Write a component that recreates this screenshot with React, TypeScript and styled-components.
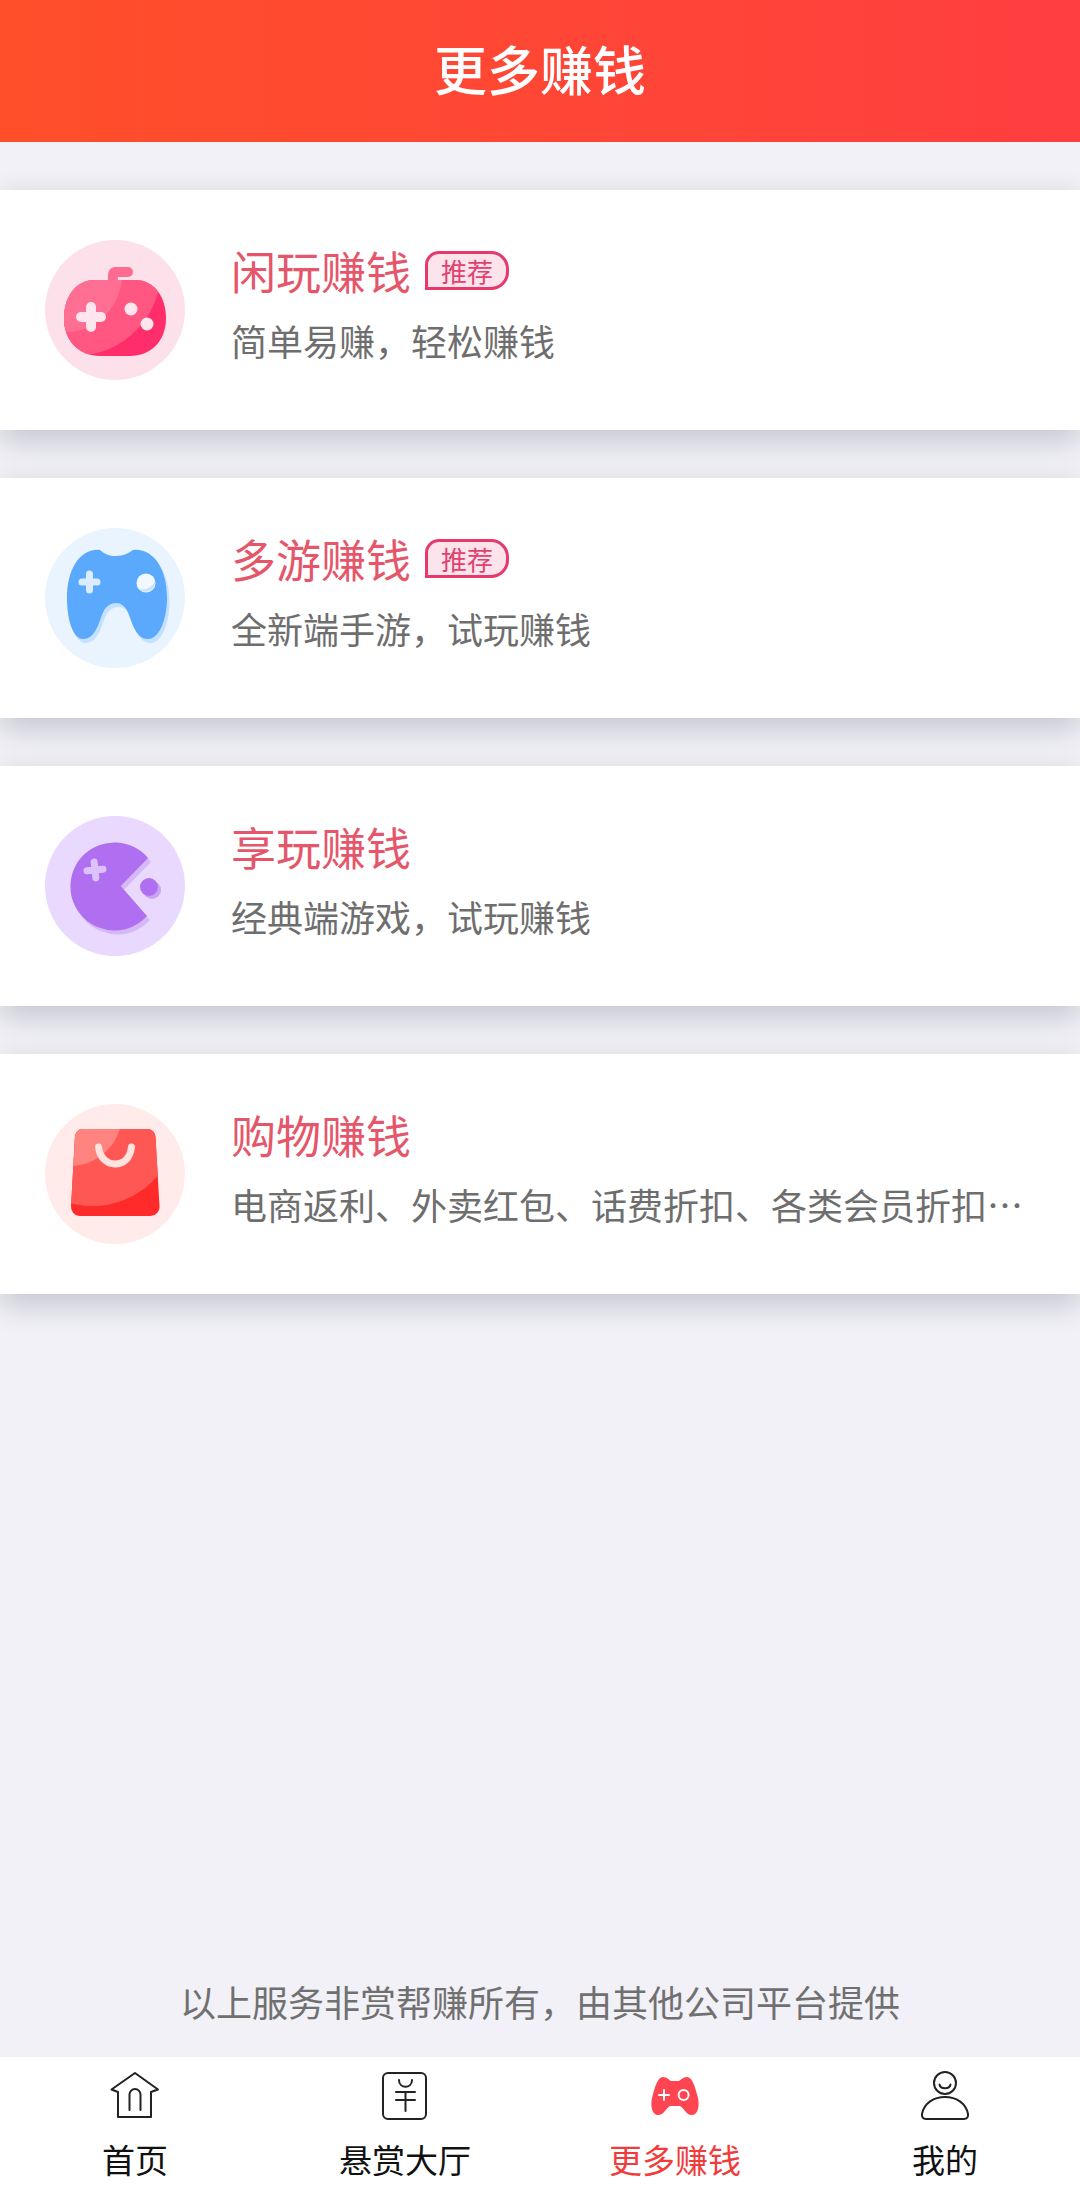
import React from 'react';
import styled, { createGlobalStyle } from 'styled-components';

const Global = createGlobalStyle`
  html, body { margin: 0; padding: 0; background: #f1f1f7; }
  * { box-sizing: border-box; }
  body { font-family: "Noto Sans CJK SC", "Noto Sans", sans-serif; }
`;

const Page = styled.div`
  width: 1080px;
  height: 2200px;
  display: flex;
  flex-direction: column;
  background: #f1f1f7;
  overflow: hidden;
`;

const Header = styled.header`
  height: 142px;
  flex: none;
  display: flex;
  align-items: center;
  justify-content: center;
  padding-bottom: 6px;
  background: linear-gradient(90deg, #ff4f2a 0%, #ff3e40 100%);
  color: #fff;
  font-size: 53px;
  font-weight: 500;
  line-height: 1;
`;

const List = styled.main`
  flex: 1;
  display: flex;
  flex-direction: column;
  gap: 48px;
  padding-top: 48px;
`;

const Card = styled.section`
  height: 240px;
  flex: none;
  display: flex;
  align-items: center;
  gap: 46px;
  padding: 0 45px;
  background: #fff;
  box-shadow: 0 10px 30px rgba(10, 10, 30, 0.2);
`;

const IconCircle = styled.svg`
  width: 140px;
  height: 140px;
  flex: none;
  display: block;
`;

const Info = styled.div`
  flex: 1;
  min-width: 0;
  display: flex;
  flex-direction: column;
  gap: 14px;
  padding-bottom: 15px;
`;

const TitleRow = styled.div`
  display: flex;
  align-items: center;
  gap: 14px;
  height: 60px;
`;

const Title = styled.h2`
  margin: 0;
  font-size: 45px;
  font-weight: 400;
  line-height: 60px;
  color: #e5566a;
`;

const Badge = styled.span`
  width: 84px;
  height: 39px;
  display: flex;
  align-items: center;
  justify-content: center;
  border: 3px solid #e8396c;
  border-radius: 14px 18px 18px 0;
  background: #fde4ec;
  color: #e2406f;
  font-size: 26px;
  line-height: 1;
`;

const Sub = styled.p`
  margin: 0;
  font-size: 36px;
  line-height: 50px;
  color: #6e6e6e;
  white-space: nowrap;
`;

const Notice = styled.p`
  margin: 0 0 29px;
  flex: none;
  text-align: center;
  font-size: 36px;
  line-height: 52px;
  color: #707070;
`;

const Nav = styled.nav`
  height: 144px;
  flex: none;
  display: grid;
  grid-template-columns: repeat(4, 1fr);
  background: #fff;
  border-top: 1px solid #f0f0f4;
`;

const Tab = styled.div`
  display: flex;
  flex-direction: column;
  align-items: center;
  padding-top: 15px;
`;

const TabIcon = styled.svg`
  width: 48px;
  height: 48px;
  display: block;
  overflow: visible;
`;

const TabLabel = styled.span<{ $active?: boolean }>`
  margin-top: 16px;
  font-size: 33px;
  line-height: 46px;
  color: ${p => (p.$active ? '#f03c3c' : '#111')};
`;

const PinkIcon = () => (
  <IconCircle viewBox="0 0 140 140">
    <defs>
      <clipPath id="pinkBody">
        <path d="M50 40H90C110 40 121 58 121 78C121 102 105 116 85 116H55C35 116 19 102 19 78C19 58 30 40 50 40Z" />
      </clipPath>
    </defs>
    <circle cx="70" cy="70" r="70" fill="#fde1ea" />
    <path d="M68 42C68 36 67 32 71 32H83" fill="none" stroke="#ff6a90" strokeWidth="10" strokeLinecap="round" />
    <g clipPath="url(#pinkBody)">
      <rect x="15" y="36" width="110" height="84" fill="#ff2e6b" />
      <circle cx="30" cy="30" r="86" fill="#ff5682" />
      <circle cx="20" cy="35" r="57" fill="#ff6f94" />
    </g>
    <path d="M36 77H56M46 67V87" stroke="#ffe6ee" strokeWidth="10" strokeLinecap="round" />
    <circle cx="86" cy="69" r="6.5" fill="#ffe6ee" />
    <circle cx="102" cy="84" r="6.5" fill="#ffe6ee" />
  </IconCircle>
);

const padPath =
  'M55 22C60 26 64 28 71 28C78 28 84 25 88 22C108 20 122 40 122 70C122 92 114 111 103 111C92 111 88 98 84 87C81 78 76 75 71 75C66 75 60 78 57 87C53 98 49 111 38 111C28 111 22 92 22 70C22 40 36 20 55 22Z';

const BlueIcon = () => (
  <IconCircle viewBox="0 0 140 140">
    <circle cx="70" cy="70" r="70" fill="#eaf4ff" />
    <path d={padPath} fill="#c4e1ff" transform="translate(2.5 4)" />
    <path d={padPath} fill="#5aa9fd" />
    <path d="M37 54H52M44.5 46V62" stroke="#dcecff" strokeWidth="7" strokeLinecap="round" />
    <circle cx="101" cy="55" r="9.5" fill="#f2f8ff" />
    <path d="M93 60A9.5 9.5 0 0 0 110 53C106 61 98 63 93 60Z" fill="#cbe2fb" />
  </IconCircle>
);

const PurpleIcon = () => (
  <IconCircle viewBox="0 0 140 140">
    <circle cx="70" cy="70" r="70" fill="#ead9ff" />
    <path d="M103 42A44 44 0 1 0 102 100L75.7 70Z" fill="#d5b8f8" transform="translate(3 4)" />
    <path d="M103 42A44 44 0 1 0 102 100L75.7 70Z" fill="#b06ff0" />
    <g transform="rotate(-6 50 54)">
      <path d="M42 54H58M50 46V62" stroke="#dcc2fa" strokeWidth="7" strokeLinecap="round" />
    </g>
    <circle cx="107" cy="74" r="9" fill="#c9a3f4" />
    <circle cx="104" cy="71" r="9" fill="#b06ff0" />
  </IconCircle>
);

const RedIcon = () => (
  <IconCircle viewBox="0 0 140 140">
    <defs>
      <clipPath id="bagBody">
        <path d="M38 25H102C107 25 110 28 110.5 33L114.5 102C115 108 110 112 105 112H35C30 112 26 108 26 102L30 33C30.5 28 33 25 38 25Z" />
      </clipPath>
    </defs>
    <circle cx="70" cy="70" r="70" fill="#ffecea" />
    <g clipPath="url(#bagBody)">
      <rect x="20" y="20" width="100" height="96" fill="#ff2a2a" />
      <circle cx="48" cy="18" r="84" fill="#ff5854" />
      <circle cx="25" cy="10" r="52" fill="#ff837e" />
    </g>
    <path d="M53.5 43C55 55 63 60 70 60C78 60 85 55 86.5 43" fill="none" stroke="#ffe3df" strokeWidth="7" strokeLinecap="round" />
  </IconCircle>
);

const HomeIcon = () => (
  <TabIcon viewBox="0 0 48 48" fill="none" stroke="#222" strokeWidth="2" strokeLinejoin="round" strokeLinecap="round">
    <path d="M24 1L47 17.5L40 20V45H7V20L.5 17.5Z" />
    <path d="M18.5 38V22.5A5.5 5.5 0 0 1 29.5 22.5V38" />
  </TabIcon>
);

const TicketIcon = () => (
  <TabIcon viewBox="0 0 48 48" fill="none" stroke="#222" strokeWidth="2" strokeLinecap="round">
    <rect x="2" y="1" width="43" height="46" rx="5" />
    <path d="M18 8C18 17 31 17 31 8" />
    <path d="M15 20H34M15 28H34M24.5 20V39" />
  </TabIcon>
);

const GameIcon = () => (
  <TabIcon viewBox="0 0 48 48">
    <path
      d="M12 5C16 5 18 8 20 9H28C30 8 32 5 36 5C41 5 44 14 47 26C49 36 46 43 41 43C35 43 33 36 29 34H19C15 36 13 43 7 43C2 43-1 36 1 26C4 14 7 5 12 5Z"
      fill="#ff4452"
    />
    <path d="M8 23H18M13 18V28" stroke="#fff" strokeWidth="2" strokeLinecap="round" />
    <circle cx="32.6" cy="23" r="5" fill="none" stroke="#fff" strokeWidth="2" />
  </TabIcon>
);

const UserIcon = () => (
  <TabIcon viewBox="0 0 48 48" fill="none" stroke="#222" strokeWidth="2" strokeLinecap="round">
    <circle cx="24" cy="11" r="11" />
    <path d="M18.5 12.5C19.5 17.5 28.5 17.5 29.5 12.5" />
    <path d="M5 47H43C46 47 47.5 45 47 42C45 31 35 25 24 25C13 25 3 31 1 42C.5 45 2 47 5 47Z" />
  </TabIcon>
);

const items = [
  { icon: <PinkIcon />, title: '闲玩赚钱', sub: '简单易赚，轻松赚钱', badge: true },
  { icon: <BlueIcon />, title: '多游赚钱', sub: '全新端手游，试玩赚钱', badge: true },
  { icon: <PurpleIcon />, title: '享玩赚钱', sub: '经典端游戏，试玩赚钱', badge: false },
  { icon: <RedIcon />, title: '购物赚钱', sub: '电商返利、外卖红包、话费折扣、各类会员折扣…', badge: false },
];

const tabs = [
  { icon: <HomeIcon />, label: '首页' },
  { icon: <TicketIcon />, label: '悬赏大厅' },
  { icon: <GameIcon />, label: '更多赚钱', active: true },
  { icon: <UserIcon />, label: '我的' },
];

export default function App() {
  return (
    <Page>
      <Global />
      <Header>更多赚钱</Header>
      <List>
        {items.map(item => (
          <Card key={item.title}>
            {item.icon}
            <Info>
              <TitleRow>
                <Title>{item.title}</Title>
                {item.badge && <Badge>推荐</Badge>}
              </TitleRow>
              <Sub>{item.sub}</Sub>
            </Info>
          </Card>
        ))}
      </List>
      <Notice>以上服务非赏帮赚所有，由其他公司平台提供</Notice>
      <Nav>
        {tabs.map(tab => (
          <Tab key={tab.label}>
            {tab.icon}
            <TabLabel $active={tab.active}>{tab.label}</TabLabel>
          </Tab>
        ))}
      </Nav>
    </Page>
  );
}
